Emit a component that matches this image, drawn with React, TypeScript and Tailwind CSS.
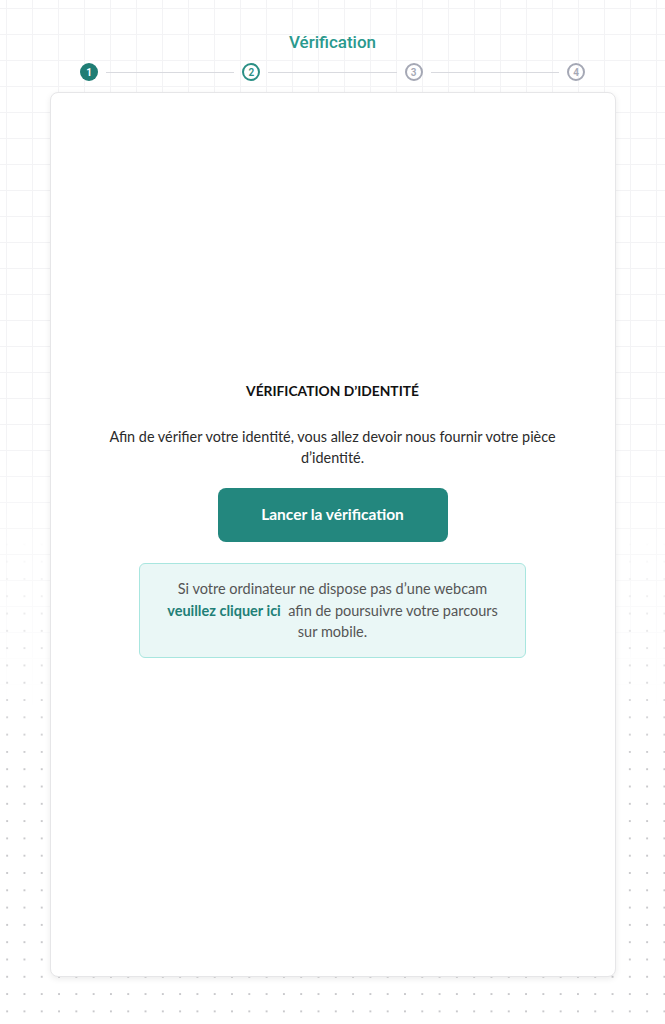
import React from "react";

const steps = [1, 2, 3, 4];

function StepDot({ n, current }: { n: number; current: number }) {
  if (n === current) {
    return (
      <div className="flex h-[18px] w-[18px] shrink-0 items-center justify-center rounded-full bg-[#1f7d74] text-[10px] font-bold text-white">
        {n}
      </div>
    );
  }
  if (n === current + 1) {
    return (
      <div className="flex h-[18px] w-[18px] shrink-0 items-center justify-center rounded-full border-2 border-[#2a8f85] text-[10px] font-semibold text-[#2a8f85]">
        {n}
      </div>
    );
  }
  return (
    <div className="flex h-[18px] w-[18px] shrink-0 items-center justify-center rounded-full border-2 border-[#a5a8b5] text-[10px] font-semibold text-[#a5a8b5]">
      {n}
    </div>
  );
}

export default function App() {
  return (
    <div className="relative min-h-screen overflow-hidden bg-white font-['Lato',_'Noto_Sans',_sans-serif]">
      {/* background: grid on top, dots further down */}
      <div className="pointer-events-none absolute inset-0 bg-[linear-gradient(to_right,#f3f3f5_1px,transparent_1px),linear-gradient(to_bottom,#f3f3f5_1px,transparent_1px)] bg-[size:26px_26px] bg-[position:6px_8px] [mask-image:linear-gradient(to_bottom,black_0%,black_42%,transparent_70%)]" />
      <div className="pointer-events-none absolute inset-0 bg-[radial-gradient(circle,#c9c9cc_1px,transparent_1.3px)] bg-[size:17.3px_17.3px] bg-[position:-1.5px_-0.5px] [mask-image:linear-gradient(to_bottom,transparent_52%,black_75%)]" />

      <div className="relative flex flex-col items-center pt-[31px] pb-[47px]">
        <h1 className="font-['Roboto',_sans-serif] text-[17px] leading-[22px] font-medium text-[#2a998d]">
          Vérification
        </h1>

        <div className="mt-[10px] flex w-[505px] items-center font-['Roboto',_sans-serif]">
          {steps.map((n, i) => (
            <React.Fragment key={n}>
              <StepDot n={n} current={1} />
              {i < steps.length - 1 && (
                <div className="mx-2 h-px flex-1 bg-[#d9dadf]" />
              )}
            </React.Fragment>
          ))}
        </div>

        <main className="mt-[11px] flex h-[885px] w-[566px] flex-col items-center justify-center rounded-lg border border-[#e6e6e8] bg-white pb-[30px] shadow-[0_2px_6px_rgba(0,0,0,0.08)]">
          <h2 className="text-[13.8px] font-bold text-[#111]">
            VÉRIFICATION D’IDENTITÉ
          </h2>
          <p className="mt-[24px] w-[480px] text-center text-[14.4px] leading-[21px] text-[#2b2b2b]">
            Afin de vérifier votre identité, vous allez devoir nous fournir
            votre pièce d’identité.
          </p>
          <button className="mt-[20px] h-[54px] w-[230px] rounded-lg bg-[#23877e] text-[15.5px] font-bold text-white">
            Lancer la vérification
          </button>
          <div className="mt-[21px] w-[387px] rounded-md border border-[#a8e6df] bg-[#eaf7f6] px-4 py-[14px] text-center text-[14.5px] leading-[21.5px] text-[#555]">
            Si votre ordinateur ne dispose pas d’une webcam
            <br />
            <a href="#" className="font-bold text-[#1f8077]">
              veuillez cliquer ici
            </a>
            &nbsp; afin de poursuivre votre parcours
            <br />
            sur mobile.
          </div>
        </main>
      </div>
    </div>
  );
}
